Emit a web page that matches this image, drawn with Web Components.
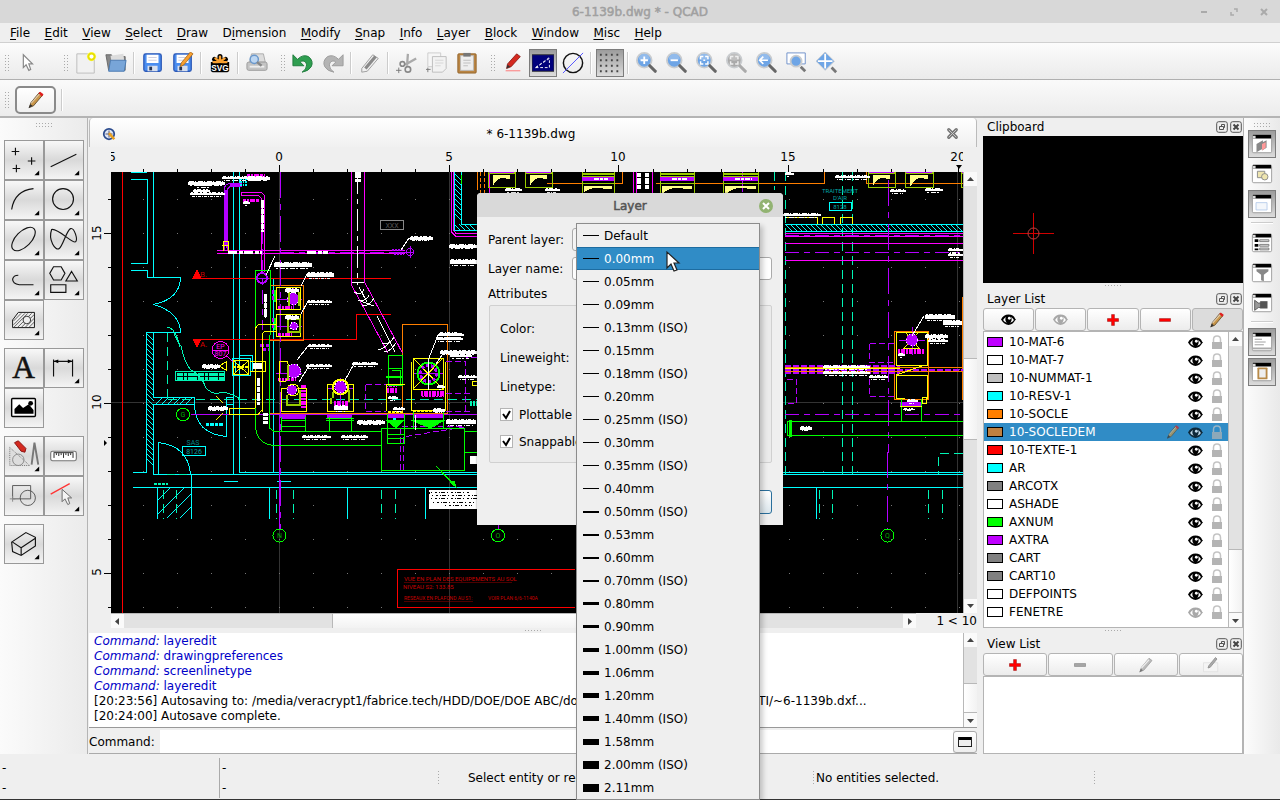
<!DOCTYPE html>
<html lang="en">
<head>
<meta charset="utf-8">
<title>6-1139b.dwg * - QCAD</title>
<style>
  html, body { height: 100%; margin: 0; }
  body { font: 12px/16px "DejaVu Sans", sans-serif; color: #000; background: #efefef; overflow: hidden; }
</style>
</head>
<body>
<qcad-app></qcad-app>
<script>
/* ---------- helpers ---------- */
const define = (tag, css, html) => customElements.define(tag, class extends HTMLElement {
  constructor() { super(); this.attachShadow({ mode: 'open' }); }
  connectedCallback() {
    const body = typeof html === 'function' ? html(this) : html;
    this.shadowRoot.innerHTML = `<style>*{box-sizing:border-box}${css}</style>${body}`;
  }
});
const BTN = `button{font:inherit;color:inherit;margin:0;padding:0;border:0;background:none}`;

/* ---------- icons ---------- */
const pencil = (x, a, b) => `<g transform="translate(${x})"><path d="M4 21l2-6L16 3l4 3L9 19z" fill="${a}" stroke="#554020" stroke-width="1"/><path d="M15 4l2-2 4 3-2 3z" fill="${b}"/><path d="M6 16L16 5" stroke="#fff" stroke-opacity=".5" stroke-width="1.5"/><path d="M3 22l2-5 3 2z" fill="#333"/></g>`;
const lens = (inner, grey) => `<circle cx="9" cy="9" r="8" fill="${grey ? '#aaa' : '#6ea5e6'}" stroke="#c9cccf" stroke-width="2"/><path d="M3 8a6 6 0 0 1 12 0q-6 3-12 0" fill="#fff" opacity=".25"/><path d="M15 15l6 6" stroke="${grey ? '#aaa' : '#666'}" stroke-width="3.4" stroke-linecap="round"/>${inner}`;
const floppy = `<rect x="2" y="2" width="19" height="19" rx="2" fill="#4a8df0" stroke="#2a57b5" stroke-width="1.4"/><rect x="5" y="3" width="13" height="9" fill="#fff"/><path d="M7 6h9M7 9h9" stroke="#ccd" /><rect x="6" y="15" width="11" height="6" fill="#d7dfee"/><rect x="8" y="16" width="3" height="4" fill="#235"/>`;
const win = c => `<rect x="1.5" y="2.5" width="21" height="19" rx="1.5" fill="#fff" stroke="#999"/><path d="M2 2h20v4H2z" fill="#000"/><path d="M2 3h3v3H2z" fill="#ddd"/>${c}`;
const eye = c => `<g transform="translate(0 2)"><path d="M0 7Q3 1 9 1t8 5l1 1-1 1q-3 5.500-8 5.500T0 7z" fill="${c}"/><path d="M2.500 7.500Q4 5 6 4q-2 4 1 7-3-1-4.500-3.500zM15.500 7.500Q14 5 12 4q2 4-1 7 3-1 4.500-3.500z" fill="#fff"/><circle cx="10" cy="5.500" r="1.700" fill="#fff"/></g>`;
const corner = `<path d="M36 31v5h-5z" fill="#000"/>`;
const tool = (d, rest = '', c = true) => `<path d="${d}" fill="none" stroke="#111" stroke-width="1.2"/>${rest}${c ? corner : ''}`;
const ICONS = {
  pointer: [24, `<path d="M8 3v14l3-3 3 6 2-1-2-6h4z" fill="#fff" stroke="#888" stroke-width="1.3"/>`],
  new: [24, `<path d="M2 2h19v21H2z" fill="#f1f1f1" stroke="#bbb"/><circle cx="18" cy="5" r="5" fill="#ffff70"/><circle cx="18" cy="5" r="3.4" fill="#fff" stroke="#e8e000" stroke-width="2.2"/>`],
  open: [24, `<path d="M1 3h6l1 2h14v15H4z" fill="#888" stroke="#666"/><path d="M6 4l14-2 1 8H7z" fill="#ddd"/><path d="M6 9h17l-2 12H4z" fill="#78a5d8" stroke="#4878b0"/>`],
  save: [24, floppy],
  saveas: [24, floppy + `<path d="M9 16l1-4L20 0l3 2L13 14z" fill="#f8a030" stroke="#a06010" stroke-width=".8"/>`],
  svg: [24, `<path d="M2 11h20v9q0 2-2 2H4q-2 0-2-2z" fill="#000"/><g stroke="#000" stroke-width="5.5" stroke-linecap="round"><path d="M12 13V5M12 13L6 8M12 13l6-5M12 13H5M12 13h7"/></g><g stroke="#f8a030" stroke-width="2.6" stroke-linecap="round"><path d="M12 11V5M12 11L7 7M12 11l5-4M10 11H5M14 11h5"/></g><text x="12" y="21" font-size="9" font-weight="bold" text-anchor="middle" fill="#fff" font-family="Liberation Sans, sans-serif">SVG</text>`],
  print: [24, `<path d="M4 11L6 2h13l2 9z" fill="#ddd" stroke="#aaa"/><rect x="1" y="11" width="22" height="9" rx="2" fill="#c4c4c4" stroke="#999"/><path d="M4 16h16" stroke="#eee" stroke-width="2"/><circle cx="9" cy="8" r="4.5" fill="#bcd6f2" stroke="#6a98cc" stroke-width="1.6"/><path d="M12 11l5 4" stroke="#888" stroke-width="2.5"/>`],
  undo: [24, `<path d="M6 8q6-6 12-3 6 5 3 11-3 5-10 6 5-3 5-8-1-5-6-4l-1 1 4 4H1V3z" fill="#2f9e50" stroke="#1c7a3a"/>`],
  redo: [24, `<path d="M18 8Q12 2 6 5 0 10 3 16q3 5 10 6-5-3-5-8 1-5 6-4l1 1-4 4h12V3z" fill="#b4b4b4" stroke="#999"/>`],
  eraser: [24, `<path d="M3 18L15 3l6 4L9 21l-6 1z" fill="#f0f0f0" stroke="#999"/><path d="M7 18L18 5" stroke="#8a8a8a" stroke-width="3.5"/>`],
  cut: [24, `<path d="M13 2l-1 13M22 7L10 14" stroke="#aaa" stroke-width="2.5"/><circle cx="7" cy="13" r="2.5" fill="none" stroke="#888" stroke-width="1.8"/><circle cx="13" cy="19" r="3" fill="none" stroke="#888" stroke-width="1.8"/><path d="M3 17v6M0 20h6" stroke="#777"/>`],
  copy: [24, `<path d="M2 1h14v15H2z" fill="#f6f6f6" stroke="#ccc"/><path d="M7 5h15v13l-4 4H7z" fill="#f2f2f2" stroke="#bbb"/><path d="M10 9h9M10 12h9M10 15h6" stroke="#d4d4d4"/><path d="M2 17v5M0 19h5" stroke="#777"/>`],
  paste: [24, `<rect x="2" y="2" width="20" height="21" rx="1" fill="#b98544" stroke="#94652b"/><rect x="5" y="4" width="14" height="16" fill="#eee" stroke="#bbb"/><rect x="8" y="1" width="8" height="4" fill="#777"/><path d="M8 9h8M8 12h8M8 15h5" stroke="#bbb"/>`],
  pen: [24, `<path d="M5 18l1-5L16 2l4 3L10 16z" fill="#d42a20" stroke="#7c1510" stroke-width=".8"/><path d="M5 18l1-4 3 2z" fill="#333"/><path d="M4 20.5h16" stroke="#ff7070"/>`],
  linetool: [24, `<rect x="0" y="3" width="24" height="18" fill="#00007c" stroke="#333"/><path d="M4 17h15V7zL19 6" fill="none" stroke="#fff" stroke-dasharray="3 2"/>`],
  draft: [24, `<circle cx="12" cy="12" r="10.5" fill="none" stroke="#111" stroke-width="1.6"/><path d="M1 23L23 1" stroke="#4848ff" stroke-width="1"/>`],
  grid: [24, `<path d="M1 3h24M1 9h24M1 15h24M1 21h24" stroke="#444" stroke-width="2" stroke-dasharray="2 4"/>`],
  zin: [24, lens(`<path d="M9 5v8M5 9h8" stroke="#fff" stroke-width="2"/>`)],
  zout: [24, lens(`<path d="M5 9h8" stroke="#fff" stroke-width="2"/>`)],
  zauto: [24, lens(`<path d="M5 8V5h3M10 5h3v3M13 10v3h-3M8 13H5v-3M8 9h2" stroke="#fff" stroke-width="1.6" fill="none"/>`)],
  zsel: [24, lens(`<path d="M5 8V5h3M10 5h3v3M13 10v3h-3M8 13H5v-3" stroke="#eee" stroke-width="1.6" fill="none"/>`, 1)],
  zprev: [24, lens(`<path d="M4 9h9M8 5L4 9l4 4" stroke="#fff" stroke-width="1.8" fill="none"/>`)],
  zwin: [24, `<path d="M1 1h20v12H1z" fill="#fff" stroke="#6a8cc8"/><circle cx="11" cy="10" r="6" fill="#6ea5e6" stroke="#c9cccf" stroke-width="2"/><path d="M16 16l5 5" stroke="#777" stroke-width="3"/>`],
  zpan: [24, `<path d="M10 0l10 10-10 10L0 10z" fill="#6ea5e6" stroke="#c9cccf"/><path d="M10 2v16M2 10h16" stroke="#fff" stroke-width="2"/><path d="M17 17l5 5" stroke="#777" stroke-width="3"/>`],
  pencil: [24, pencil(0, '#c8964a', '#e02020')],
  pencilgrey: [24, `<path d="M4 21l2-6L16 3l4 3L9 19z" fill="#bbb" stroke="#999"/><path d="M6 16L16 5" stroke="#eee" stroke-width="1.5"/><path d="M3 22l2-5 3 2z" fill="#777"/>`],
  pencilbox: [24, `<path d="M2 9h19v12H2z" fill="#f4f4f4" stroke="#ddd"/><path d="M8 16l1-3 9-11 2 2-9 11z" fill="#aaa" stroke="#888"/>`],
  plus: [24, `<path d="M12 2v20M2 12h20" stroke="#a33" stroke-width="6"/><path d="M12 3v18M3 12h18" stroke="#f00" stroke-width="4"/>`],
  minus: [24, `<path d="M2 12h20" stroke="#a33" stroke-width="6"/><path d="M3 12h18" stroke="#f00" stroke-width="4"/>`],
  minusgrey: [24, `<path d="M2 12h20" stroke="#888" stroke-width="6"/><path d="M3 12h18" stroke="#aaa" stroke-width="3"/>`],
  points: [40, tool('M11 7v8M7 11h8M28 17v8M24 21h8M12 25v8M8 29h8')],
  line: [40, tool('M6 27L33 14')],
  arc: [40, tool('M7 30Q10 10 30 8')],
  circle: [40, tool('M8 19a11 11 0 1 0 22 0 11 11 0 1 0-22 0')],
  ellipse: [40, `<ellipse cx="19.5" cy="19" rx="15.5" ry="8" transform="rotate(-45 19.5 19)" fill="none" stroke="#111" stroke-width="1.2"/>` + corner],
  spline: [40, tool('M7 9C3 20 11 32 15 29S23 9 27 8s8 12 5 14S13 7 7 9z')],
  poly: [40, tool('M30 25H15q-7-1-7-6 1-4 6-4')],
  shapes: [40, tool('M5 13l4-7h8l4 7-4 7H9zM28 11l6 10H22zM6 25h16v8H6z')],
  hatch: [40, `<path d="M8 20l6-8h17v16H8z" fill="#eee" stroke="#111"/><path d="M9 25l12-12M9 28l15-15M13 28l15-15M17 28l14-14M21 28l10-10M25 28l6-6M9 21l8-8" stroke="#333" stroke-width=".8"/><circle cx="23" cy="20" r="4" fill="#eee" stroke="#333"/>` + corner],
  text: [40, `<text x="19.5" y="31" text-anchor="middle" font-family="Liberation Serif, serif" font-size="33" fill="#111" stroke="#111" stroke-width=".6">A</text>`],
  dim: [40, tool('M9 29V11M29 29V11M9 13h20', '<path d="M9 13l5-2v4zM29 13l-5-2v4z"/>')],
  image: [40, `<rect x="7" y="10" width="25" height="19" rx="1" fill="#fff" stroke="#000" stroke-width="1.5"/><path d="M10 26v-5l5-5 4 4 6-4 5 6v4z"/><circle cx="27" cy="15" r="2.5"/>`],
  drafting: [40, `<path d="M5 11v19h21z" fill="#ddd" stroke="#777" stroke-dasharray="1 1"/><circle cx="14" cy="24" r="6" fill="none" stroke="#888"/><path d="M31 6l-3 23M31 6l4 23" stroke="#777" stroke-width="2" fill="none"/><path d="M10 6l4-2 8 8-1 4-4-1z" fill="#d42a20" stroke="#811"/>` + corner],
  measure: [40, `<rect x="6" y="15" width="27" height="10" rx="2" fill="#fff" stroke="#777" stroke-width="1.2"/><path d="M9 16.5h21M9.500 17v5M14.500 17v3M19.500 17v5M24.500 17v3M29.500 17v5M12 17v2M17 17v2M22 17v2M27 17v2" stroke="#222"/>`],
  block: [40, `<path d="M8 9h19v14H8z" fill="none" stroke="#555"/><circle cx="24" cy="22" r="8" fill="none" stroke="#555"/><path d="M8 20v6M5 23h6" stroke="#888"/>`],
  select: [40, `<path d="M6 18L26 7" stroke="#f33" stroke-width="1.3"/><path d="M18 13v13l3-3 3 6 2-1-2-6h4z" fill="#f4f4f4" stroke="#666"/>` + corner],
  iso: [40, tool('M7 18L22 8l10 5v9L17 32 8 28zM8 18l9 6v8M17 24l15-10')],
  w1: [24, win(`<path d="M6 12l7-4v9l-7 4zM11 11l6-3v8l-5 3z" fill="#888"/><path d="M12 12l4-2v6l-4 3z" fill="#f99"/>`)],
  w2: [24, win(`<path d="M7 9h8v7H7z" fill="#eee5b0" stroke="#888"/><circle cx="15" cy="15" r="3.5" fill="#eee5b0" stroke="#888"/>`)],
  w3: [24, win(`<path d="M5.500 10.500h12v8h-12z" fill="#f4f7fb" stroke="#b8cdea"/>`)],
  w4: [24, win(`<path d="M4 8h4v3H4zM4 13h4v3H4zM4 18h4v2H4z"/><path d="M9.500 8.500h10v2h-10zM9.500 13.500h10v2h-10zM9.500 17.500h10v2h-10z" fill="#ddd" stroke="#777"/>`)],
  w5: [24, win(`<path d="M6 8h13v2l-5 4v7l-3-1v-6L6 10z" fill="#888"/>`)],
  w6: [24, win(`<path d="M4 9l4 3h3v5H8l-4 3z" fill="#999" stroke="#555"/><path d="M10 10h8v8h-8z" fill="#555"/>`)],
  w7: [24, win(`<path d="M4 9h8M4 12h12M4 15h10" stroke="#999"/><path d="M2 19h20" stroke="#aaa" stroke-width="2"/>`)],
  w8: [24, win(`<rect x="7" y="7" width="11" height="13" rx="1" fill="#b88a48"/><path d="M9 9h7v9H9z" fill="#eee"/>`)],
  cadlogo: [16, `<circle cx="8" cy="8" r="6" fill="#dfe6f4" stroke="#2b4b8e" stroke-width="2"/><path d="M8 4v8M4 8h8" stroke="#446"/><path d="M8 7l6 7" stroke="#e8a020" stroke-width="3"/>`],
  close: [16, `<path d="M4 4l8 8M12 4l-8 8" stroke="#777" stroke-width="3.5" stroke-linecap="round"/><path d="M4 4l8 8M12 4l-8 8" stroke="#ccc" stroke-width="1"/>`],
  eyeon: [18, eye('#000')],
  eyeoff: [18, eye('#a8a8a8')],
  lock: [14, `<path d="M3.500 8V4.500q0-3.500 3.500-3.500t3.500 3.500V8" fill="none" stroke="#c4c4c4" stroke-width="1.5"/><path d="M2 7h10v7H2z" fill="#b4b4b4"/>`],
  float: [12, `<rect x=".7" y=".7" width="10.6" height="10.6" rx="2" fill="none" stroke="#555"/><path d="M3.500 5.500h4v3h-4zM5.500 5v-1.500h3v3h-1" fill="none" stroke="#555"/>`],
  shut: [12, `<rect x=".7" y=".7" width="10.6" height="10.6" rx="2" fill="none" stroke="#555"/><path d="M3.500 3.500l5 5M8.500 3.500l-5 5" stroke="#444" stroke-width="2"/>`],
  history: [16, `<rect x="1.5" y="3.5" width="13" height="9" fill="#eee" stroke="#222"/><path d="M2 3h12v3H2z"/>`]
};
define('app-icon', `:host{display:block;flex:none;line-height:0}`, el => {
  const [box, body] = ICONS[el.getAttribute('name')];
  const size = el.getAttribute('size') || box;
  return `<svg width="${size}" height="${size}" viewBox="0 0 ${box} ${box}" aria-hidden="true">${body}</svg>`;
});

/* ---------- window chrome ---------- */
define('title-bar', `${BTN}:host{display:grid;grid-template-columns:1fr auto 1fr;align-items:center;height:23px;padding-top:1px;flex:none;background:#d8d8d8;color:#a0a0a0}
  h1{grid-column:2;margin:0;font:inherit;-webkit-text-stroke:.5px}
  div{grid-column:3;display:flex;justify-content:flex-end;gap:14px;padding-right:8px}
  button{width:16px;height:16px;color:#999}`,
  `<h1>6-1139b.dwg * - QCAD</h1><div><button aria-label="Minimize"><svg width="16" height="16"><path d="M5 8h6" stroke="#aaa" stroke-width="2"/></svg></button><button aria-label="Maximize"><svg width="16" height="16"><path d="M8 5h3v3M5 8v3h3" fill="none" stroke="#aaa" stroke-width="1.5"/></svg></button><button aria-label="Close"><svg width="16" height="16"><path d="M5 5l6 6M11 5l-6 6" stroke="#aaa" stroke-width="2"/></svg></button></div>`);

define('menu-bar', `${BTN}:host{display:block;flex:none;height:20px;padding-left:3px;border-bottom:1px solid #d0d0d0;background:#efefef}
  nav{display:flex;justify-content:space-between;width:666px}
  button{padding:1px 7px 0;height:19px} u{text-underline-offset:2px}`,
  () => '<nav>' + ['<u>F</u>ile','<u>E</u>dit','<u>V</u>iew','<u>S</u>elect','<u>D</u>raw','D<u>i</u>mension','<u>M</u>odify','<u>S</u>nap','<u>I</u>nfo','<u>L</u>ayer','<u>B</u>lock','<u>W</u>indow','<u>M</u>isc','<u>H</u>elp'].map(t => `<button>${t}</button>`).join('') + '</nav>');

define('drag-grip', `:host{display:block;flex:none;width:9px;height:18px;background:radial-gradient(circle,#aaa 0 .8px,transparent 1px) 2px 0/3px 3px repeat-y,radial-gradient(circle,#aaa 0 .8px,transparent 1px) 5px 0/3px 3px repeat-y}
  :host([flat]){width:18px;height:6px;background:radial-gradient(circle,#aaa 0 .8px,transparent 1px) 0 0/3px 3px}
  :host([thin]){width:3px;height:16px;background:radial-gradient(circle,#aaa 0 .8px,transparent 1px) 0 0/3px 3px}
  :host([slim]){width:18px;height:3px;background:radial-gradient(circle,#aaa 0 .8px,transparent 1px) 0 0/3px 3px}`, '');

define('bar-line', `:host{display:block;flex:none;width:5px;height:22px;background:linear-gradient(90deg,transparent 1px,#ccc 1px 2px,#fff 2px 3px,transparent 3px)}
  :host([flat]){width:22px;height:5px;background:linear-gradient(transparent 1px,#ccc 1px 2px,#fff 2px 3px,transparent 3px)}`, '');

define('tool-button', `${BTN}:host{display:block;flex:none}
  button{display:grid;place-items:center;width:28px;height:28px}
  :host([pressed]) button{border:1px solid #7c7c7c;background:linear-gradient(#9c9c9c,#dcdcdc)}`,
  el => `<button aria-label="${el.getAttribute('icon')}"><app-icon name="${el.getAttribute('icon')}" size="22"></app-icon></button>`);

define('tool-bar', `:host{display:flex;align-items:center;flex:none;height:37px;gap:7px;padding:3px 0 0 2px;border-bottom:1px solid #b0b0b0;background:linear-gradient(#fcfcfc,#ebebeb)}
  div{display:flex;align-items:center;gap:2px} .first{width:52px}`,
  () => [['pointer'], ['new','open','|','save','saveas','|','svg','|','print'], ['undo','redo','|','eraser','|','cut','copy','paste'], ['pen','linetool*','draft','|','grid*','|','zin','zout','zauto','zsel','zprev','zwin','zpan']]
    .map((g, i) => `<div class="${i ? '' : 'first'}"><drag-grip></drag-grip>${g.map(n => n === '|' ? '<bar-line></bar-line>' : `<tool-button icon="${n.replace('*', '')}" ${n.endsWith('*') ? 'pressed' : ''}></tool-button>`).join('')}</div>`).join(''));

define('option-bar', `${BTN}:host{display:flex;align-items:center;flex:none;height:38px;gap:4px;padding:4px 0 0 2px;border-bottom:2px solid #b4b4b4;background:linear-gradient(#fafafa,#ececec)}
  button{display:grid;place-items:center;width:41px;height:28px;border:2px solid #8a8a8a;border-radius:5px;background:linear-gradient(#fff,#f0f0f0)}`,
  `<drag-grip></drag-grip><button aria-label="Edit layer"><app-icon name="pencil" size="20"></app-icon></button><bar-line></bar-line>`);

/* ---------- left palette ---------- */
define('tool-palette', `${BTN}:host{display:flex;flex-direction:column;align-items:center;flex:none;width:88px;padding-top:4px;border-right:1px solid #b4b4b4;background:linear-gradient(90deg,#fbfbfb,#ebebeb)}
  drag-grip{margin-bottom:12px}
  .group{display:grid;grid-template-columns:40px 40px;margin-bottom:8px}
  button{width:40px;height:40px;border:1px solid #999;background:linear-gradient(#f8f8f8,#d9d9d9 50%,#f4f4f4);display:grid;place-items:center}`,
  () => '<drag-grip flat></drag-grip>' + [['points','line','arc','circle','ellipse','spline','poly','shapes','hatch'],['text','dim','image'],['drafting','measure','block','select'],['iso']]
    .map(g => `<div class="group">${g.map(n => `<button aria-label="${n}"><app-icon name="${n}" size="38"></app-icon></button>`).join('')}</div>`).join(''));

define('side-bar', `:host{display:flex;flex-direction:column;align-items:center;gap:2px;flex:none;width:37px;padding-top:4px;border-left:1px solid #b4b4b4;background:linear-gradient(90deg,#fcfcfc,#e9e9e9)}
  bar-line{margin:1px 0}`,
  () => '<drag-grip flat></drag-grip>' + ['w1*','w2','w3*','|','w4','w5','w6','|','w7*','w8*'].map(n => n === '|' ? '<bar-line flat></bar-line>' : `<tool-button icon="${n.replace('*', '')}" ${n.endsWith('*') ? 'pressed' : ''}></tool-button>`).join(''));

/* ---------- scroll bars ---------- */
define('scroll-bar', `${BTN}:host{display:flex;flex-direction:column;flex:none;width:14px;background:#e2e2e2;border-left:1px solid #b8b8b8}
  :host([flat]){flex-direction:row;width:auto;height:15px;border:0;border-top:1px solid #b8b8b8}
  button{flex:none;width:13px;height:14px;background:#fafafa;display:grid;place-items:center}
  .thumb{flex:var(--size);background:linear-gradient(90deg,#fff,#f2f2f2);border:solid #b8b8b8;border-width:1px 0}
  :host([flat]) .thumb{border-width:0 1px;background:linear-gradient(#fff,#f2f2f2)}
  .before{flex:var(--before)} .after{flex:var(--after)}`,
  el => { const f = el.hasAttribute('flat');
    return `<button aria-label="Back"><svg width="7" height="7"><path d="${f ? 'M5 0v7L1 3.5z' : 'M0 5h7L3.5 1z'}" fill="#444"/></svg></button><div class="before"></div><div class="thumb"></div><div class="after"></div><button aria-label="Forward"><svg width="7" height="7"><path d="${f ? 'M2 0v7l4-3.5z' : 'M0 2h7L3.5 6z'}" fill="#444"/></svg></button>`; });

/* ---------- drawing ---------- */
/* Annotation leaders too small to read at this zoom: a solid core with ragged rows above and below. */
const scribbles = [[188,183,225,3],[195,185,212,2],[190,194,225,2],[193,191,210,2],[222,178,262,2],[243,203,250,2],[247,178,270,3],[274,265,312,4],[307,275,334,4],[307,302,332,2],[285,290,299,3],[285,317,299,3],[410,238,433,3],[449,246,477,3],[450,262,477,4],[438,335,464,2],[436,339,463,2],[439,333,460,1],[440,352,477,3],[450,356,472,2],[458,377,477,2],[202,366,220,3],[208,408,228,3],[308,346,332,2],[306,366,332,2],[352,364,378,2],[302,437,331,2],[341,437,368,2],[357,422,385,3],[446,422,476,4],[393,409,405,2],[388,398,398,2],[433,410,445,3],[334,408,348,4],[437,387,445,2],[505,190,522,2],[545,190,560,2],[785,174,794,2],[835,177,870,2],[890,191,906,2],[925,190,943,2],[783,215,821,2],[948,250,963,2],[948,255,963,2],[925,317,955,4],[943,323,962,4],[925,336,948,3],[928,341,948,2],[898,355,905,2],[800,428,812,3],[869,377,888,2],[907,401,918,2],[903,409,915,1],[823,367,870,2],[823,373,870,2]]
  .map(([x, y, x2, w]) => { const h = Math.floor(w / 2) + 1; return `<path d="M${x} ${y}H${x2}" stroke-width="${w}"/><path d="M${x + 1} ${y - h}.5H${x2 - 2}" stroke-dasharray="${['2 1 4 2','3 2 1 1','5 1 1 2'][(x + y) % 3]}"/><path d="M${x + 2} ${y + h}.5H${x2 - 3}" stroke-dasharray="${['3 1 1 1','1 1 4 2','2 2 5 1'][(x + y) % 3]}"/>`; }).join('');
const dots = (() => { let s = ''; for (let y = 199; y < 613; y += 34) for (let x = 143; x < 963; x += 34) s += `M${x} ${y}h1`; return s; })();
const hatchRun = (x1, x2, y, h, step, slope) => { let s = ''; for (let x = x1; x < x2; x += step) s += `M${x} ${slope > 0 ? y : y + h}l${h} ${slope > 0 ? h : -h}`; return s; };
const hatchCol = (y1, y2, x, w, step) => { let s = ''; for (let y = y1; y < y2; y += step) s += `M${x} ${y}l${w} ${w}`; return s; };
const machine = (x, y, w) => `<g><path d="M${x} ${y}h${w}v15h-${w}z" fill="none" stroke="#9c0"/><path d="M${x + 5} ${y + 14}v-11h${w - 10}v4l-9-1q-6 3-8 8z" fill="#ff8"/><path d="M${x + 1} ${y - 1}h${w - 2}" stroke="#b0f" stroke-width="3"/><path d="M${x} ${y + 1}h${w}" stroke="#9c0"/></g>`;
const bigMachine = (x, w) => `<g><path d="M${x} 172V194M${x + w} 172V194M${x} 183.500h${w}" stroke="#9c0"/><path d="M${x} 174h${w}M${x} 177h${w}" stroke="#9c0" stroke-width="2"/><path d="M${x} 179h${w}" stroke="#b0f" stroke-width="4"/><path d="M${x + 12} 178.500h${w - 18}" stroke="#fff" stroke-width="2" stroke-dasharray="5 1 3 1"/><path d="M${x + 2} 193v-7h${w - 4}v3l-18-1q-8 2-11 5z" fill="#ff8"/></g>`;
define('cad-drawing', `:host{display:block;min-width:0;min-height:0;background:#000;overflow:hidden} svg{display:block;width:100%;height:100%}`,
`<svg viewBox="111 172 852 441" preserveAspectRatio="xMinYMin slice" fill="none" shape-rendering="crispEdges" font-family="Roboto, Liberation Sans, sans-serif">
<g stroke="#333"><path d="M111 402.5H963M279.5 172V613M449.5 172V613M957.5 172V613"/></g>
<path d="${dots}" stroke="#777" transform="translate(0 .5)"/>
<g stroke="#0ff">
 <path d="M131 172.5H147M131 179.5H147.5V263.5H131M131 270.5H147.5V277.5H180.5Q180 299 153.5 304.5Q180 312 180.5 332.5H146.5V472.5H133M153.5 172V277M153.5 333V397.5H194V404.5H153.5V474.5M233.5 172V474M239.5 172V472.5M273.5 278V472"/>
 <path d="M194.5 404Q195 434 226.5 436.5V397.5H233M226.5 404.5H233M158.5 474V442.5Q188 446 190.5 474M133 487.5H963M239 472.5H963M154 474.5H963M224 481.5h14M277 481.5h14"/>
 <path d="M157.5 488V519M191.5 474V519M269.5 488V519M347.5 488V519M425.5 488V519M816.5 488V519M182.5 446.5H205.5V455.5H182.5z"/>
 <path d="M232.5 358.5H250.5V375.5H232.5zM238.5 355.5H252.5V372M235.5 360V373"/>
 <path d="M454.5 172V230.5H477M461.5 172V224.5H477M785 224.5H963M785 231.5H963"/>
 <path d="${hatchCol(173, 218, 454, 7, 5)}${hatchCol(334, 464, 147, 7, 5)}${hatchRun(454, 474, 224, 7, 5, 1)}${hatchRun(785, 960, 224, 7, 5, 1)}${hatchRun(156, 190, 397, 7, 6, -1)}"/>
 <path d="M158 500l12-12M158 514l26-26M167 518l24-24M180 518l11-11M829.5 202.5h22v8h-22z"/>
 <path d="M240 182h8M240 179h8M240 185h8" stroke-dasharray="2 1 1 1" stroke-width="2"/>
 <path d="M206 424.5h18M393 419h4" stroke-width="3" stroke-dasharray="3 1 4 1"/>
</g>
<g stroke="#00f5b5">
 <path d="M168 399.5H477M167.5 333V399M163.5 490V519M176.5 490V519M276.5 490V519M293.5 490V519M381.5 490V519M395.5 490V519M842.5 172V474M852.5 172V474M819.5 490V519M832.5 490V519M928.5 490V519M942.5 490V519M963 453.5H938.5V474M774.5 172V190M785.5 172V474" stroke-dasharray="9 5"/>
 <path d="M167 474.5H188" stroke-dasharray="8 4"/>
 <path d="M174 333Q178 344 181 346Q185 364 191 370Q202 376 206 388Q214 396 222 392Q234 394 240 399M167 327q8 0 13 20"/>
 <path d="M177 374H225M177 378H225" stroke-width="3" stroke-dasharray="6 1 3 1 9 1"/>
 <path d="M175.5 371.5H224.5V380.5H175.5z"/>
 <path d="M154 484H168" stroke-width="2" stroke-dasharray="3 1"/>
 <path d="M470 403H477" stroke-width="5" stroke-dasharray="2 1"/>
</g>
<g stroke="red">
 <path d="M122.5 172V613M193 278.5H391M193 339.5H356.5V314.5H391M575 569.5H397.5V607.5H575"/>
 <path d="M193 278l4-8 4 8zM193 339h8l-4 8z" fill="red"/>
</g>
<g stroke="#ff7f00">
 <path d="M270 285.5H303.5V340.5H270M402.5 413V324.5H447.5V413.5H270M477 172V190M547 183.5H622V172M656 183.5H824V172M866 172V183.5H963M894.5 331.5H928.5V399.5H894.5zM962.5 297V400"/>
 <path d="M480.5 172V194M484.5 172V194" stroke-dasharray="4 2"/>
 <path d="M785 367.5H963M785 371.5H963"/>
</g>
<g stroke="#f0f">
 <path d="M351.5 172V285L388 353M364.5 172V282L402.5 353M280 250.5H405M280 253.5H405M217 250.5H280M217 253.5H280M451.5 172V232L456 236.5H477M453.5 172V230L456 233.5H477"/>
 <path d="M261.5 272V200Q261 196 257 195.5H241M264.5 272V196Q263 192 258 192.5H241V196M489.5 172V194M633.5 172V194M636 172V194M652.5 172V194M785 233.5H963M785 236.5H963M785 243.5H963M785 260.5H963"/>
 <circle cx="220.5" cy="350" r="8.5"/><path d="M212 350H229M227 356l6 6"/>
 <path d="M243 200.500H260M247 175.500H265M278 307.500H292M278 334.500H292M278 379.500H296" stroke-width="3" stroke-dasharray="3 1 2 1 5 1"/>
 <path d="M387 390H398M334 403H348M421 393H446M898 351H924M303 408V385" stroke-width="5" stroke-dasharray="2 1 4 1"/>
 <path d="M386 386H397M422 396H444" stroke-dasharray="2 1 3 1"/>
</g>
<g stroke="#b400ff">
 <path d="M224.5 250V190Q224 184 230 183.5H242M227.5 250V190Q228 187 231 186.5H242M191 414.5H477"/><path d="M225.5 245V190M230 185H240" stroke-width="2"/>
 <path d="M280.5 172V530M888.5 180V453M887.5 452V530" stroke-dasharray="26 6 6 6"/><path d="M498.5 524V530M742.5 172V192M279.5 414V530"/>
 <path d="M226 193V250M262.5 200V330M785 252.5H963M785 414.5H963M785 235H963M280 252H405" stroke-dasharray="14 5 6 5"/>
 <path d="M365.5 384.5H386M365.5 384.5V411.5H386M446 361.5H465.5V411M446 393H470M446 411H470M477 357H466M400.5 470V426.5H465M403 470V437L464 427M869.5 343.5H894M869.5 343.5V362.5H896M869.5 378.5V396.5H896M787 379.5H796.5V403H787" stroke-dasharray="6 3"/>
 <path d="M785 366H900M785 370H963M785 373H900" stroke-width="2" stroke-dasharray="6 2"/>
 <circle cx="262" cy="278" r="5" stroke-width="2"/><path d="M255 278H269"/><circle cx="410" cy="252" r="3.5"/><path d="M395 252H414M410 246V258"/><path d="M392 250h12M394 254h10" stroke-width="2" stroke-dasharray="2 1"/>
 <path d="M388 416H404M413 416H443M327 416H352M281 417H306M900 404H921" stroke-width="4"/>
 <path d="M276 299h26M293 287v22M276 326h26M276 373h26M328 388h26M340 378v26M912 327v28M899 340h26M413 373h30"/>
 <path d="M273 290v12M273 318v12M260 345h12M262 349h8" stroke-width="3" stroke-dasharray="4 2"/>
</g>
<g stroke="#0f0">
 <circle cx="183" cy="414.5" r="6.5"/><circle cx="279.5" cy="535.5" r="6.5"/><circle cx="498" cy="535.5" r="6.5"/><circle cx="887.5" cy="535.5" r="6.5"/>
 <path d="M255.5 335V425Q256 444 274 445.5H381M269.5 335V428L274 431.5H381M255 335V270.5H270V335M464 431.5H477M464 452.5H477M381.5 428.5H464.5V470.5H381.5z"/>
 <path d="M281.5 417V431M305.5 417V431M329.5 417V431M351.5 417V431M281 420.5H306M326 420.5H354M281 426.5H306M326 418.5H354M388.5 355H402.5V385H388.5zM391.5 370H400.500V384M388 355V368H402M387 434.5H404M387 438.5H404M387 443.5H404.5V414M387.5 443V414M413.5 411V428M443.5 411V428"/>
 <path d="M386 420h18l-8 8zM411 420h34l-15 8z" fill="#0f0"/><path d="M436 466L456 487"/><path d="M450 482l4-1 2 6z" fill="#0f0"/>
 <path d="M787 421.5H963M787 435.5H963M901.5 399V421M921.5 399V421M787.5 421V436M461 175V184"/><path d="M790.5 420V437M275 290v12M275 318v12" stroke-width="3"/>
 <circle cx="428.5" cy="373.5" r="11" stroke-width="2"/><path d="M386 377H402" stroke-width="2"/>
</g>
<g stroke="#ff0">
 <path d="M276.5 287.5H300.5V309.5H276.5zM276.5 314.5H300.5V336.5H276.5zM327.5 384.5H353.5V411.5H327.5zM386.5 411V384.5H405M281 388.5H306.5V411.5H281zM411.5 362V410.5H445.5V362M413.5 358.5H443.5V389.5H413.5zL443 389M443 358L413 389"/>
 <path d="M255.5 408V330Q256 324 261 324.5H277M262.5 412V334Q263 331 267 331.5H277M229 408.5H255M229 414.5H258L262 410M229.5 408V415M233.5 360.5H248.5V374.5H233.5zL248 374M248 361L234 374M250 361.5H265V371H250M279 361h8l4 12-5 8h-7z"/>
 <path d="M223 251V241H228V251M222 245H229M219 366l7-4v8zM216 396l7 7M216 420l7-7"/>
 <path d="M896.5 332.5H927.5V365H896.5zM896.5 375.5H927.5V399M896.5 375V398.5H905M905 332L919 348H904L919 332M896 375L922 366M900 406.5H922M922.5 397h4v6h-4zM785 217.5H817V224M822.5 224V217.5H834.5V224M840.5 224V217.5H852.5V224M785 368.5H900"/>
 <circle cx="293" cy="390" r="6"/><circle cx="340.5" cy="387" r="7.5" stroke-width="2"/><path d="M472 381h5v4h-5z"/>
 <path d="M388 412H404M413 411H443M233 367h16" stroke-width="2" stroke-dasharray="3 1"/>
</g>
<g fill="#b400ff" stroke="#fff" stroke-dasharray="1 2">
 <circle cx="293" cy="299" r="6"/><circle cx="294" cy="326" r="4"/><circle cx="294" cy="371" r="7"/><circle cx="292" cy="390" r="5"/><circle cx="340.5" cy="387" r="6"/><circle cx="912" cy="340" r="6"/>
</g>
<g stroke="#9c0" stroke-width="2"><path d="M288 319h12v13h-12zM331 398V404M349 390V402M333 392V398M287 395V405H300V390M288 365V380M289 292v14M299 292v14"/><circle cx="428.5" cy="373.5" r="8" stroke="#b400ff" stroke-width="3" stroke-dasharray="3 2"/></g>
${machine(488, 172, 27)}${machine(525, 172, 27)}${machine(868, 172, 27)}${machine(905, 172, 28)}${machine(961, 172, 28)}${bigMachine(582, 32)}${bigMachine(660, 34)}${bigMachine(723, 35)}
<g stroke="#fff">
 ${scribbles}
 <path d="M357.5 172V285" stroke-dasharray="22 5 5 5"/><path d="M358 172V182" stroke-width="6" stroke-dasharray="6 1 3 1"/><path d="M352 282H364M354 292q8 4 10-3M358 300q8 2 11-5M358 300l16 6M362 306q8 0 12-8M382 343q8 2 12-6M378 350q8-2 12-9M384 352q6 0 12-9M359 287l8 15M377 316l18 36M262 200V232M265.5 294V318"/>
 <path d="M262.5 200V232M265 294V318M258 378V405" stroke-width="3" stroke-dasharray="8 1 5 1"/>
 <path d="M401 250l8-12h4M266 275l9-19M301 286l6-12h5M301 314l7-13M297 360l11-14M299 382l10-16M345 380l9-16M429 358l9-23M436 364l8-12M912 336l12-20M415.5 415V430M428.5 358V390"/>
 <path d="M228 252H262M307 252.5H328" stroke-width="3" stroke-dasharray="9 2 4 1"/>
 <path d="M639 173V189M647 173V189" stroke-width="4" stroke-dasharray="4 1 6 1"/>
 <path d="M265 413V425" stroke-width="5" stroke-dasharray="3 1"/><path d="M253 366H262" stroke-width="6"/>
 <path d="M429 490.5H477M429 508H477M430 493H477" stroke-width="2"/><path d="M429 501H477" stroke-width="14"/>
 <path d="M470 460H477" stroke-width="8"/>
</g>
<path d="M431 492.5H470M432 495.5H477M431 498.5H477M433 502.5H475M445 505.5H472" stroke="#000" stroke-dasharray="1 3 2 2 1 1 4 2"/>
<path d="M380.5 220.5H403.5V229.5H380.5z" stroke="#888"/>
<g shape-rendering="auto">
 <text x="392" y="228" font-size="7" fill="#555" text-anchor="middle">XXX</text>
 <text x="200" y="277" font-size="8" fill="#b00">B.</text><text x="200" y="347" font-size="8" fill="#d00">A.</text>
 <text x="193" y="445" font-size="7" fill="#008888" text-anchor="middle">SAS</text><text x="194" y="454" font-size="7" fill="#00a0a0" text-anchor="middle">8126</text>
 <g fill="#00a8a8" font-size="6" text-anchor="middle"><text x="840" y="193">TRAITEMENT</text><text x="840" y="200">D'AIR</text><text x="840" y="209">8128</text></g>
 <g fill="#0a0" font-size="7" text-anchor="middle"><text x="183" y="417">G</text><text x="279.5" y="538">N</text><text x="498" y="538">O</text><text x="887.5" y="538">Q</text></g>
 <g fill="#c80000"><text x="404" y="581" font-size="6">VUE EN PLAN DES EQUIPEMENTS AU SOL</text><text x="403" y="589" font-size="6">NIVEAU S2: 133.85</text><text x="404" y="600" font-size="5">RESEAUX EN PLAFOND AU S1:</text><text x="488" y="600" font-size="5">VOIR PLAN 6/6-1140A</text></g>
 <path d="M404 601.5H473M404 582.5H512" stroke="#900" stroke-width=".5"/>
 <g fill="#f0f" font-size="7" text-anchor="middle"><text x="220.5" y="349">EP</text><text x="220.5" y="356">807</text></g>
</g>
</svg>`);

define('top-ruler', `:host{display:block;overflow:hidden;min-width:0} svg{display:block;width:100%;height:25px} text{font-size:12px;text-anchor:middle}`, () => {
  let s = ''; for (let i = 0; i < 60; i++) { const x = 32 + i * 34; s += (i + 1) % 5 === 0 ? '' : `M${x}.5 22v3`; }
  return `<svg><path d="${s}M168.5 18v7M338.5 18v7M507.5 18v7M677.5 18v7M847.5 18v7" stroke="#000"/><path d="M845 18h6l-3 4z"/>${[[1,5],[168,0],[338,5],[507,10],[677,15],[847,20]].map(([x, t]) => `<text x="${x}" y="14">${t}</text>`).join('')}</svg>`;
});
define('left-ruler', `:host{display:block;overflow:hidden;min-height:0} svg{display:block;width:22px;height:100%} text{font-size:12px;text-anchor:middle}`, () => {
  let s = ''; for (let i = 0; i < 40; i++) { const y = 27 + i * 34; s += i % 5 === 1 ? `M15 ${y}.5h7` : `M19 ${y}.5h3`; }
  return `<svg><path d="${s}" stroke="#000"/><path d="M15 268v6l3-3z"/>${[[61,15],[230,10],[400,5]].map(([y, t]) => `<text transform="translate(12 ${y}) rotate(-90)">${t}</text>`).join('')}</svg>`;
});

define('drawing-view', `${BTN}:host{display:grid;flex:1;min-height:0;grid-template:29px 25px 1fr 15px / 22px 1fr 14px;background:#efefef}
  header{grid-column:1/-1;display:grid;grid-template-columns:1fr auto 1fr;align-items:center;padding:2px 16px 0 12px;background:linear-gradient(#fff,#f0f0f0);border-left:1px solid #bbb;border-right:1px solid #bbb;border-radius:4px 4px 0 0}
  header button{justify-self:end} top-ruler{grid-column:2} left-ruler{grid-row:3;grid-column:1} cad-drawing{grid-row:3;grid-column:2}
  .v{grid-row:3;grid-column:3;--before:173;--size:80;--after:160}
  footer{grid-row:4;grid-column:2/-1;display:flex;justify-content:space-between;white-space:nowrap}
  .h{flex:1;--before:208;--size:250;--after:320}
  .page{width:61px;text-align:right}`,
  `<header><app-icon name="cadlogo" size="14"></app-icon><span>* 6-1139b.dwg</span><button aria-label="Close drawing"><app-icon name="close" size="15"></app-icon></button></header><top-ruler></top-ruler><left-ruler></left-ruler><cad-drawing></cad-drawing><scroll-bar class="v"></scroll-bar><footer><scroll-bar flat class="h"></scroll-bar><span class="page">1 &lt; 10</span></footer>`);

define('command-panel', `${BTN}:host{display:block;flex:none}
  drag-grip{margin:1px auto}
  .log{display:flex;height:95px;background:#fff;border-bottom:1px solid #999}
  .lines{flex:1;min-width:0;padding:1px 0 0 5px;overflow:hidden;white-space:nowrap}
  p{margin:0;line-height:15px} .c{color:#0000c8} scroll-bar{--before:34;--size:27;--after:.1}
  form{display:flex;align-items:center;margin-top:2px;height:24px;border-bottom:1px solid #aaa} label{padding-top:1px}
  input{flex:1;min-width:0;height:23px;margin-left:5px;border:0;padding:0;background:#fff;font:inherit}
  button{display:grid;place-items:center;width:24px;height:22px;border:1px solid #aaa;border-radius:3px;background:linear-gradient(#fff,#eee)}`,
  `<drag-grip slim></drag-grip><div class="log"><div class="lines">${['layeredit','drawingpreferences','screenlinetype','layeredit'].map(c => `<p class="c"><i>Command:</i> ${c}</p>`).join('')}<p>[20:23:56] Autosaving to: /media/veracrypt1/fabrice.tech/HDD/DOE/DOE ABC/doe/CLIMATISATION/PLANS-ATI VTI/~6-1139b.dxf...</p><p>[20:24:00] Autosave complete.</p></div><scroll-bar></scroll-bar></div><form><label for="cmd">Command:</label><input id="cmd"><button type="button" aria-label="History"><app-icon name="history"></app-icon></button></form>`);

/* ---------- docks ---------- */
define('dock-panel', `${BTN}:host{display:flex;flex-direction:column;flex:none}
  header{display:flex;align-items:center;gap:2px;height:18px;padding:0 1px 0 4px;flex:none} h2{flex:1;margin:0;font:inherit} header button{display:block}`,
  el => `<header><h2>${el.getAttribute('heading')}</h2><button aria-label="Float"><app-icon name="float"></app-icon></button><button aria-label="Close"><app-icon name="shut"></app-icon></button></header><slot></slot>`);

define('clip-preview', `:host{display:block;height:147px;background:#000} svg{display:block}`,
  `<svg width="100%" height="147" fill="none" stroke="#d00000"><path d="M30 97.5h41M50.5 77v41"/><circle cx="50.5" cy="97.5" r="5.5" stroke="#b44"/></svg>`);

define('button-strip', `${BTN}:host{display:flex;flex:none;gap:1px}
  button{flex:1;height:23px;display:grid;place-items:center;border:1px solid #b4b4b4;border-radius:3px;background:linear-gradient(#fff,#ececec)}
  .on{background:#dcdcdc}`,
  el => el.getAttribute('icons').split(' ').map(n => `<button aria-label="${n.replace('*', '')}" class="${n.endsWith('*') ? 'on' : ''}"><app-icon name="${n.replace('*', '')}" size="${n.startsWith('eye') ? 15 : n.startsWith('pencil') ? 18 : 14}"></app-icon></button>`).join(''));

define('layer-row', `${BTN}:host{display:flex;align-items:center;height:18px;padding-left:3px}
  .sw{width:16px;height:10px;margin-right:6px;border:1px solid #000} span{flex:1}
  button{width:22px;height:18px;display:grid;place-items:center}
  :host([selected]){background:#308cc6;color:#fff} :host([selected]) app-icon{opacity:.7}`,
  el => `<div class="sw" style="background:${el.getAttribute('color')}"></div><span>${el.getAttribute('name')}</span>${el.hasAttribute('selected') ? '<app-icon name="pencil" size="16"></app-icon><i style="width:3px"></i>' : ''}<button aria-label="Visible"><app-icon name="${el.hasAttribute('off') ? 'eyeoff' : 'eyeon'}" size="15"></app-icon></button><button aria-label="Lock"><app-icon name="lock"></app-icon></button>`);

define('layer-list', `:host{display:flex;flex:none;height:297px;background:#fff;border:1px solid #b4b4b4} .rows{flex:1;padding-top:1px} scroll-bar{--before:205;--size:62;--after:.1}`,
  () => `<div class="rows">${[['10-MAT-6','#bf00ff'],['10-MAT-7','#fff'],['10-NUMMAT-1','#c0c0c0'],['10-RESV-1','#0ff'],['10-SOCLE','#ff7f00'],['10-SOCLEDEM','#bf8040','selected'],['10-TEXTE-1','#f00'],['AR','#0ff'],['ARCOTX','#808080'],['ASHADE','#fff'],['AXNUM','#0f0'],['AXTRA','#bf00ff'],['CART','#808080'],['CART10','#808080'],['DEFPOINTS','#fff'],['FENETRE','#fff','off']].map(([n, c, f = '']) => `<layer-row name="${n}" color="${c}" ${f}></layer-row>`).join('')}</div><scroll-bar></scroll-bar>`);

define('dock-column', `:host{display:flex;flex-direction:column;flex:none;width:260px;margin-left:6px}
  drag-grip{margin:1px auto} .view{flex:1;min-height:0} .empty{flex:1;background:#fff;border:1px solid #b4b4b4} .layers,.view{padding-top:2px}`,
  `<dock-panel heading="Clipboard"><clip-preview></clip-preview></dock-panel><drag-grip slim></drag-grip>
   <dock-panel class="layers" heading="Layer List"><button-strip icons="eyeon eyeoff plus minus pencil*"></button-strip><layer-list></layer-list></dock-panel><drag-grip slim></drag-grip>
   <dock-panel class="view" heading="View List"><button-strip icons="plus minusgrey pencilgrey pencilbox"></button-strip><div class="empty"></div></dock-panel>`);

/* ---------- status bar ---------- */
define('status-bar', `:host{display:grid;flex:none;height:46px;padding-top:2px;grid-template-columns:219px 218px 375px 281px 1fr;align-items:center;background:#efefef;border-bottom:1px solid #333}
  .coord{display:grid;align-content:space-around;height:40px;padding-left:2px} .coord + .coord{border-left:1px solid #aaa}
  .msg{display:flex;align-items:center;gap:1px} .first{gap:28px}`,
  `<div class="coord"><span>-</span><span>-</span></div><div class="coord"><span>-</span><span>-</span></div><div class="msg first"><drag-grip thin></drag-grip><span>Select entity or region</span></div><div class="msg"><drag-grip thin></drag-grip><span>No entities selected.</span></div><drag-grip thin></drag-grip>`);

/* ---------- dialog ---------- */
define('layer-dialog', `${BTN}:host{display:block;width:306px;background:#efefef;border-radius:4px 4px 0 0;box-shadow:0 0 2px #0008}
  header{display:grid;grid-template-columns:1fr auto 1fr;align-items:center;height:24px;padding:1px 10px 0;background:#d9d9d9;border-radius:4px 4px 0 0;color:#555}
  h2{grid-column:2;margin:0;padding-top:1px;font:inherit;-webkit-text-stroke:.5px}
  header button{justify-self:end;width:14px;height:14px;border-radius:50%;background:#92b372;display:grid;place-items:center}
  form{padding:11px} .grid{display:grid;grid-template-columns:84px 1fr;align-items:center}
  .top{grid-auto-rows:23px;row-gap:6px}
  label{padding-top:1px}
  select,input[type=text]{height:23px;width:100%;border:1px solid #aaa;border-radius:3px;background:#fff;font:inherit} select{width:170px;background:#f6f6f6}
  fieldset{margin:6px 0 0;padding:0;border:0} legend{padding:0;line-height:17px}
  .box{margin-top:2px;margin-left:1px;padding:10px;border:1px solid #d0d0d0;border-radius:2px;background:#ebebeb;display:grid;grid-template-columns:84px 1fr;row-gap:5px;align-items:center;grid-template-rows:24px 24px 24px 22px 22px}
  .check{grid-column:1/-1;display:flex;align-items:center;gap:6px}
  input[type=checkbox]{appearance:none;width:13px;height:13px;margin:0;border:1px solid #b4b4b4;background:#fff url("data:image/svg+xml,%3Csvg xmlns='http://www.w3.org/2000/svg' width='11' height='11'%3E%3Cpath d='M2 5l3 4 4-7' fill='none' stroke='%23000' stroke-width='2'/%3E%3C/svg%3E") no-repeat}
  .buttons{display:flex;justify-content:flex-end;gap:6px;margin-top:27px}
  .buttons button{width:84px;height:24px;border:1px solid #aaa;border-radius:3px;background:linear-gradient(#fff,#e8e8e8)} .buttons .ok{border-color:#2a6f9c;background:linear-gradient(#fff,#dbe6ec)}`,
  `<header><h2>Layer</h2><button aria-label="Close"><svg width="8" height="8"><path d="M1 1l6 6M7 1L1 7" stroke="#fff" stroke-width="2"/></svg></button></header>
  <form><div class="grid top"><label for="p">Parent layer:</label><select id="p"></select><label for="n">Layer name:</label><input id="n" type="text"></div>
  <fieldset><legend>Attributes</legend><div class="box"><label for="c">Color:</label><select id="c"></select><label for="w">Lineweight:</label><select id="w"></select><label for="t">Linetype:</label><select id="t"></select><label class="check"><input type="checkbox" checked>Plottable</label><label class="check"><input type="checkbox" checked>Snappable</label></div></fieldset>
  <div class="buttons"><button type="button" aria-label="Cancel"></button><button type="button" class="ok" aria-label="OK"></button></div></form>`);

define('weight-menu', `${BTN}:host{display:block;width:184px;border:1px solid #8c8c8c;background:#efefef;box-shadow:3px 3px 5px #0003}
  button{display:flex;align-items:center;width:100%;height:23px;padding-left:6px;gap:5px;border:1px solid transparent;border-width:1px 0;text-align:left}
  .on{background:#308cc6;border-color:#1d6ca0;color:#fff} i{width:16px;height:var(--w);background:#000}`,
  () => `<div role="listbox" aria-label="Lineweight">${[['Default',1],['0.00mm',1],['0.05mm',1],['0.09mm',1],['0.13mm (ISO)',1],['0.15mm',1],['0.18mm (ISO)',1],['0.20mm',1],['0.25mm (ISO)',1],['0.30mm',1],['0.35mm (ISO)',1],['0.40mm',1],['0.50mm (ISO)',2],['0.53mm',2],['0.60mm',2],['0.70mm (ISO)',2],['0.80mm',3],['0.90mm',3],['1.00mm (ISO)',4],['1.06mm',4],['1.20mm',5],['1.40mm (ISO)',5],['1.58mm',6],['2.00mm (ISO)',8],['2.11mm',8]].map(([t, w], i) => `<button role="option" aria-selected="${i === 1}" class="${i === 1 ? 'on' : ''}"><i style="--w:${w}px"></i>${t}</button>`).join('')}</div>`);

/* ---------- application ---------- */
define('qcad-app', `:host{position:relative;display:flex;flex-direction:column;height:100vh;cursor:default}
  main{display:flex;flex:1;min-height:0} .center{display:flex;flex-direction:column;flex:1;min-width:0;margin-left:1px}
  layer-dialog{position:absolute;left:477px;top:193px} weight-menu{position:absolute;left:576px;top:223px}
  .cursor{position:absolute;left:665px;top:250px}`,
  `<title-bar></title-bar><menu-bar></menu-bar><tool-bar></tool-bar><option-bar></option-bar>
  <main><tool-palette></tool-palette><div class="center"><drawing-view></drawing-view><command-panel></command-panel></div><dock-column></dock-column><side-bar></side-bar></main>
  <status-bar></status-bar><layer-dialog></layer-dialog><weight-menu></weight-menu>
  <svg class="cursor" width="16" height="24"><path d="M2 2v16l4-4 3 7 3-1-3-7h5z" fill="#fff" stroke="#222" stroke-width="1.2"/></svg>`);
</script>
</body>
</html>
